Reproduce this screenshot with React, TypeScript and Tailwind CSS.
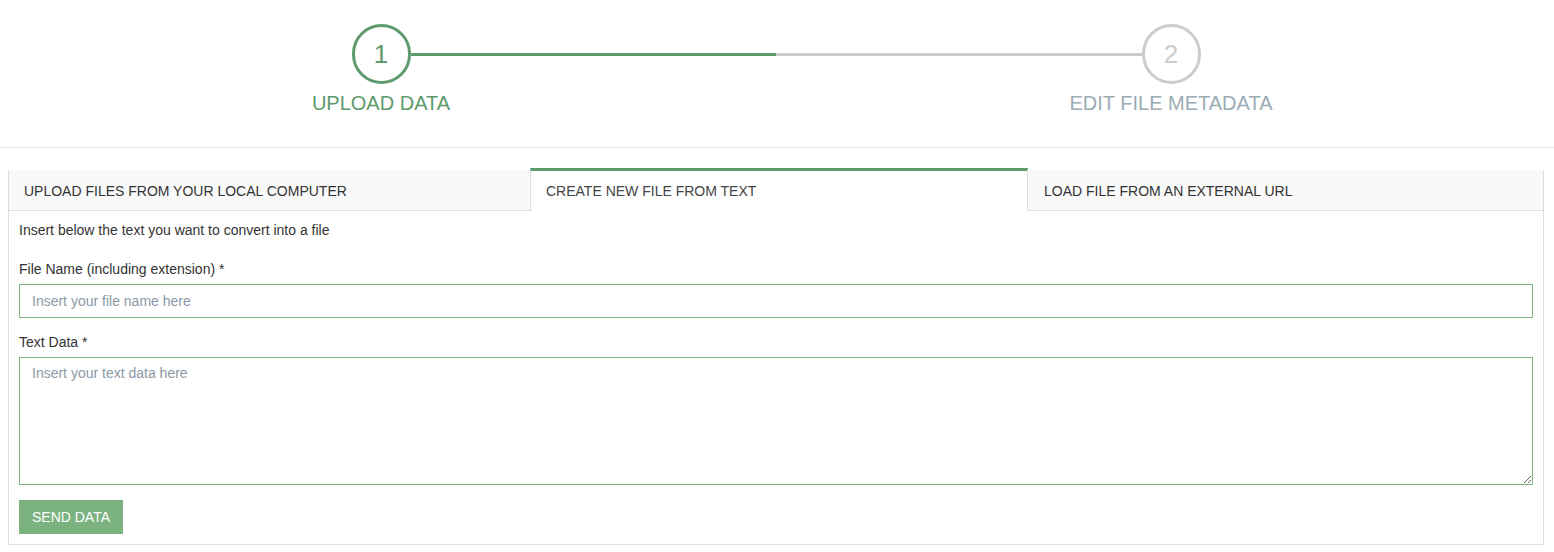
import React from "react";

export default function App() {
  return (
    <div className="min-h-[552px] bg-white text-[#333] [font-family:'Liberation_Sans',Arial,sans-serif]">
      {/* Stepper */}
      <div className="h-[148px] border-b border-[#e5e5e5] pt-[24px]">
        <div className="flex justify-center">
          <div className="grid grid-cols-[59px_731px_59px] translate-x-[-1px]">
            <div className="flex h-[60px] w-[59px] items-center justify-center rounded-full border-[3px] border-[#5e9a6d] text-[26px] text-[#5e9a6d]">
              1
            </div>
            <div className="flex items-center">
              <div className="h-[3px] w-1/2 bg-[#5e9a6d]" />
              <div className="h-[3px] w-1/2 bg-[#cccccc]" />
            </div>
            <div className="flex h-[60px] w-[59px] items-center justify-center rounded-full border-[3px] border-[#cccccc] text-[26px] text-[#cccccc]">
              2
            </div>
            <div className="mt-[7px] flex justify-center whitespace-nowrap text-[20px] leading-[24px] text-[#5e9a6d]">
              UPLOAD DATA
            </div>
            <div />
            <div className="mt-[7px] flex justify-center whitespace-nowrap text-[20px] leading-[24px] text-[#9aacb4]">
              EDIT FILE METADATA
            </div>
          </div>
        </div>
      </div>

      {/* Tabs */}
      <div className="pl-[8px] pr-[10px] pt-[22px]">
        <div className="flex text-[14px] leading-[20px]">
          <div className="flex h-[41px] w-[522px] items-center border-b border-l border-[#dddddd] bg-[#f9f9f9] pl-[15px] pt-[1px] text-[#333]">
            UPLOAD FILES FROM YOUR LOCAL COMPUTER
          </div>
          <div className="-mt-[2px] flex h-[43px] w-[498px] items-center border-l border-r border-t-[3px] border-[#dddddd] border-t-[#5e9a6d] bg-white pb-[1px] pl-[15px] text-[#444]">
            CREATE NEW FILE FROM TEXT
          </div>
          <div className="flex h-[41px] flex-1 items-center border-b border-r border-[#dddddd] bg-[#f9f9f9] pl-[16px] pt-[1px] text-[#333]">
            LOAD FILE FROM AN EXTERNAL URL
          </div>
        </div>

        {/* Panel */}
        <div className="border-b border-l border-r border-[#dddddd] px-[10px] pb-[10px] pt-[9px] text-[14px] leading-[20px]">
          <p>Insert below the text you want to convert into a file</p>

          <label className="mt-[19px] block">File Name (including extension) *</label>
          <input
            type="text"
            placeholder="Insert your file name here"
            className="mt-[5px] block h-[34px] w-full border border-[#7db682] px-[12px] text-[14px] text-[#333] outline-none placeholder:text-[#8a99a8]"
          />

          <label className="mt-[14px] block">Text Data *</label>
          <textarea
            placeholder="Insert your text data here"
            className="mt-[5px] block h-[128px] w-full border border-[#7db682] px-[12px] py-[5px] text-[14px] leading-[20px] text-[#333] outline-none placeholder:text-[#8a99a8]"
          />

          <button className="mt-[15px] block h-[34px] w-[104px] bg-[#7bb27f] text-[14px] text-white">
            SEND DATA
          </button>
        </div>
      </div>
    </div>
  );
}
